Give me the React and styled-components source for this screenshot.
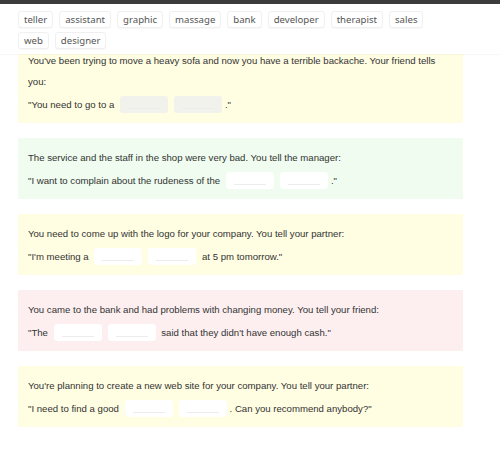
import React from 'react';
import styled, { createGlobalStyle } from 'styled-components';

const GlobalStyle = createGlobalStyle`
  html, body {
    margin: 0;
    padding: 0;
    background: #fff;
  }
`;

const Page = styled.div`
  width: 500px;
  min-height: 451px;
  overflow: hidden;
`;

const Header = styled.header`
  position: sticky;
  top: 0;
  z-index: 1;
  background: #fff;
  box-shadow: 0 1px 1px rgba(0, 0, 0, 0.03);
`;

const TopBar = styled.div`
  height: 4px;
  background: #3c3c3c;
`;

const WordBank = styled.div`
  display: flex;
  flex-wrap: wrap;
  gap: 4px 6px;
  padding: 7px 40px 5px 18px;
`;

const Chip = styled.span`
  display: inline-flex;
  align-items: center;
  height: 17px;
  padding: 0 5px;
  box-sizing: border-box;
  border: 1px solid #f0f0f0;
  border-radius: 3px;
  background: #fff;
  box-shadow: 0 1px 1px rgba(0, 0, 0, 0.03);
  font-family: 'Noto Sans', sans-serif;
  font-size: 9.6px;
  color: #555;
`;

const List = styled.main`
  display: flex;
  flex-direction: column;
  gap: 15px;
  margin-top: -13px;
  padding: 0 37px 20px 18px;
`;

const cardColors = {
  yellow: '#fffde2',
  green: '#effcef',
  pink: '#fdeff0',
};

const Card = styled.section`
  background: ${({ $tone }) => cardColors[$tone]};
  padding: 9px 10px 8px;
  font-family: 'Liberation Sans', Arial, sans-serif;
  font-size: 9.6px;
  color: #333;
`;

const Prompt = styled.p`
  margin: 0 0 2px;
  line-height: 21px;
`;

const Answer = styled.div`
  display: flex;
  align-items: center;
  height: 21px;
  white-space: pre;
`;

const Blank = styled.span`
  display: inline-block;
  width: 48px;
  height: 17px;
  margin: 0 3px;
  border-radius: 3px;
  background: linear-gradient(#ececec, #ececec) no-repeat 8px 12px / 32px 1px,
    ${({ $muted }) => ($muted ? '#f2f2ec' : '#fff')};
`;

const items = [
  {
    tone: 'yellow',
    muted: true,
    prompt:
      "You've been trying to move a heavy sofa and now you have a terrible backache. Your friend tells you:",
    before: '"You need to go to a ',
    after: '."',
  },
  {
    tone: 'green',
    prompt:
      'The service and the staff in the shop were very bad. You tell the manager:',
    before: '"I want to complain about the rudeness of the ',
    after: '."',
  },
  {
    tone: 'yellow',
    prompt: 'You need to come up with the logo for your company. You tell your partner:',
    before: '"I\'m meeting a ',
    after: ' at 5 pm tomorrow."',
  },
  {
    tone: 'pink',
    prompt:
      'You came to the bank and had problems with changing money. You tell your friend:',
    before: '"The ',
    after: ' said that they didn\'t have enough cash."',
  },
  {
    tone: 'yellow',
    prompt:
      "You're planning to create a new web site for your company. You tell your partner:",
    before: '"I need to find a good ',
    after: '. Can you recommend anybody?"',
  },
];

const words = [
  'teller',
  'assistant',
  'graphic',
  'massage',
  'bank',
  'developer',
  'therapist',
  'sales',
  'web',
  'designer',
];

export default function App() {
  return (
    <Page>
      <GlobalStyle />
      <Header>
        <TopBar />
        <WordBank>
          {words.map((w) => (
            <Chip key={w}>{w}</Chip>
          ))}
        </WordBank>
      </Header>
      <List>
        {items.map((it, i) => (
          <Card key={i} $tone={it.tone}>
            <Prompt>{it.prompt}</Prompt>
            <Answer>
              {it.before}
              <Blank $muted={it.muted} />
              <Blank $muted={it.muted} />
              {it.after}
            </Answer>
          </Card>
        ))}
      </List>
    </Page>
  );
}
